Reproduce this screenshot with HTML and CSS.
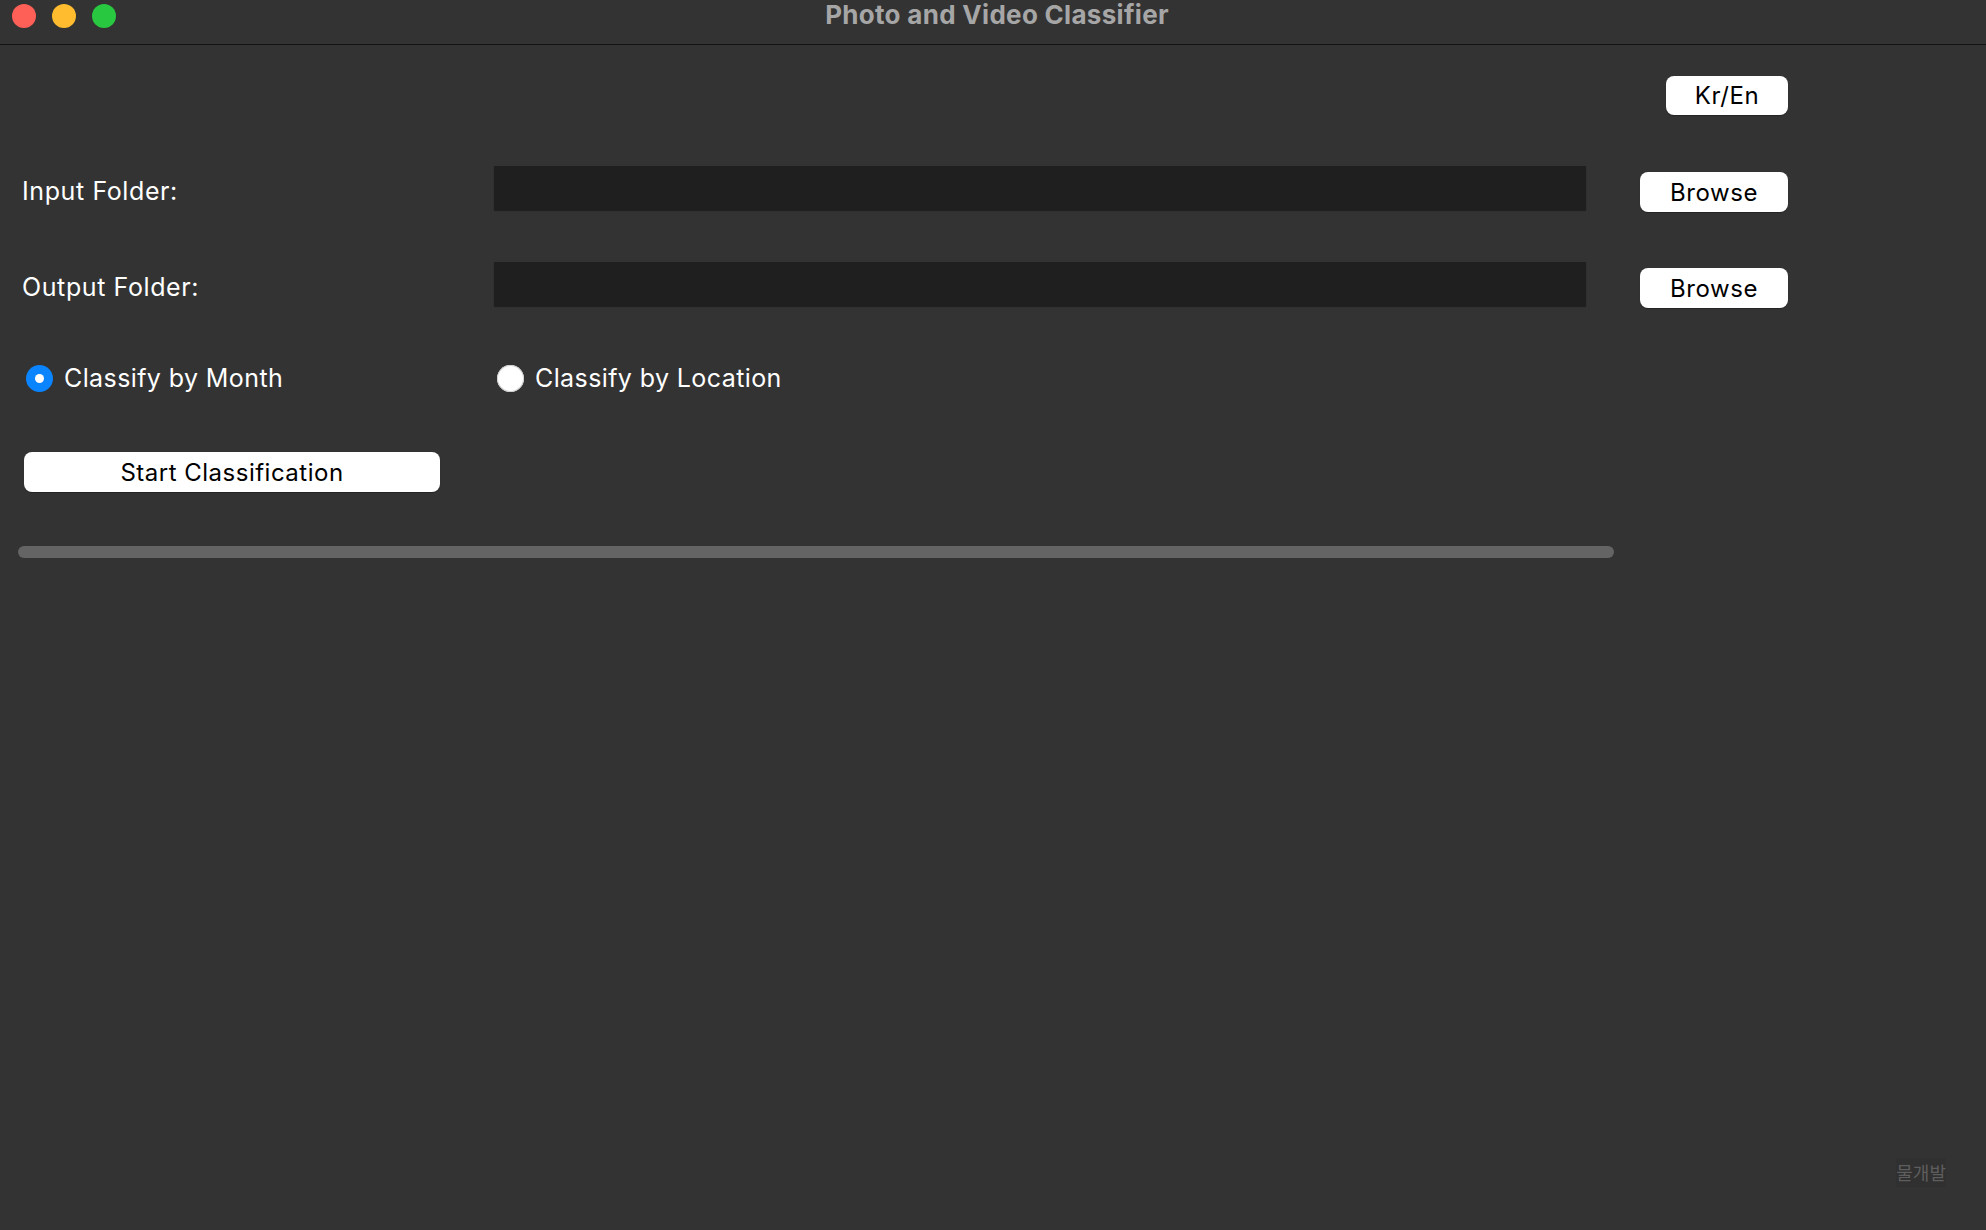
FILE: index.html
```html
<!DOCTYPE html>
<html lang="en">
<head>
<meta charset="utf-8">
<title>Photo and Video Classifier</title>
<link rel="stylesheet" href="styles.css">
</head>
<body>
<div class="window">
  <header class="titlebar">
    <div class="lights">
      <span class="light red"></span>
      <span class="light yellow"></span>
      <span class="light green"></span>
    </div>
    <div class="title">Photo and Video Classifier</div>
    <div></div>
  </header>
  <main class="content">
    <div class="form">
      <button class="btn btn-lang">Kr/En</button>

      <label class="label row-in">Input Folder:</label>
      <div class="entry row-in"></div>
      <button class="btn btn-browse row-in">Browse</button>

      <label class="label row-out">Output Folder:</label>
      <div class="entry row-out"></div>
      <button class="btn btn-browse row-out">Browse</button>

      <div class="radio-item col1 row-radio"><span class="radio checked"></span><span>Classify by Month</span></div>
      <div class="radio-item col2 row-radio"><span class="radio"></span><span>Classify by Location</span></div>

      <button class="btn btn-start">Start Classification</button>

      <div class="progress"></div>
    </div>
    <div class="footer"><span class="credit">물개발</span></div>
  </main>
</div>
</body>
</html>
```

FILE: styles.css
```css
* { box-sizing: border-box; }
html, body { margin: 0; padding: 0; height: 100%; }
body {
  background: #333333;
  font-family: Inter, "Noto Sans", "Liberation Sans", sans-serif;
  color: #ffffff;
}
.window {
  height: 100%;
  display: flex;
  flex-direction: column;
}
.titlebar {
  height: 45px;
  flex: none;
  display: grid;
  grid-template-columns: 1fr auto 1fr;
  align-items: start;
  border-bottom: 1px solid #121212;
  background: #333333;
}
.lights {
  display: flex;
  gap: 16px;
  padding-left: 12px;
  padding-top: 4px;
}
.light {
  width: 24px;
  height: 24px;
  border-radius: 50%;
  display: block;
}
.red { background: #fe5f57; }
.yellow { background: #febc2e; }
.green { background: #28c840; }
.title {
  font-weight: 700;
  font-size: 26px;
  line-height: 30px;
  color: #a6a6a6;
  letter-spacing: 0.3px;
  padding-left: 8px;
}
.content {
  flex: 1;
  display: flex;
  flex-direction: column;
  padding: 31px 0 0 18px;
}
.form {
  display: grid;
  grid-template-columns: 476px 1092px 202px;
  grid-template-rows: 90px 96px 102px 88px 94px 12px;
  align-items: start;
}
.btn {
  font-family: Inter, "Noto Sans", "Liberation Sans", sans-serif;
  background: #ffffff;
  color: #000000;
  border: none;
  border-radius: 8px;
  font-size: 24px;
  letter-spacing: 0.6px;
  padding: 0;
  box-shadow: 0 1px 1px rgba(0,0,0,0.3);
}
.btn-lang {
  grid-column: 3;
  grid-row: 1;
  justify-self: end;
  width: 122px;
  height: 39px;
}
.btn-browse {
  grid-column: 3;
  justify-self: end;
  width: 148px;
  height: 40px;
  margin-top: 6px;
}
.row-in { grid-row: 2; }
.row-out { grid-row: 3; }
.row-radio { grid-row: 4; }
.label {
  grid-column: 1;
  font-size: 25px;
  letter-spacing: 0.6px;
  line-height: 44px;
  padding-left: 4px;
  padding-top: 3px;
  color: #ffffff;
}
.entry {
  grid-column: 2;
  height: 44px;
  background: #1f1f1f;
  box-shadow: 0 1px 1px rgba(0,0,0,0.35);
}
.col1 { grid-column: 1; }
.col2 { grid-column: 2; }
.radio-item {
  display: flex;
  align-items: center;
  gap: 11px;
  font-size: 25px;
  letter-spacing: 0.4px;
  height: 28px;
  padding-left: 8px;
}
.col2.radio-item { padding-left: 3px; }
.radio {
  width: 27px;
  height: 27px;
  border-radius: 50%;
  background: #ffffff;
  flex: none;
  position: relative;
  box-shadow: inset 0 0 0 1px #d0d0d0;
}
.radio.checked {
  background: #0a84ff;
  box-shadow: none;
}
.radio.checked::after {
  content: "";
  position: absolute;
  width: 9px;
  height: 9px;
  border-radius: 50%;
  background: #ffffff;
  left: 9px;
  top: 9px;
}
.btn-start {
  grid-column: 1;
  grid-row: 5;
  width: 416px;
  height: 40px;
  margin-left: 6px;
  font-size: 24px;
  letter-spacing: 0.5px;
}
.progress {
  grid-column: 1 / 4;
  grid-row: 6;
  width: 1596px;
  height: 12px;
  border-radius: 6px;
  background: #646464;
}
.footer {
  margin-top: auto;
  display: flex;
  justify-content: flex-end;
  padding: 0 40px 43px 0;
}
.credit {
  font-family: "Noto Sans CJK KR", sans-serif;
  font-size: 18px;
  line-height: 29px;
  color: #5e5e5e;
  background: #303030;
}
```
